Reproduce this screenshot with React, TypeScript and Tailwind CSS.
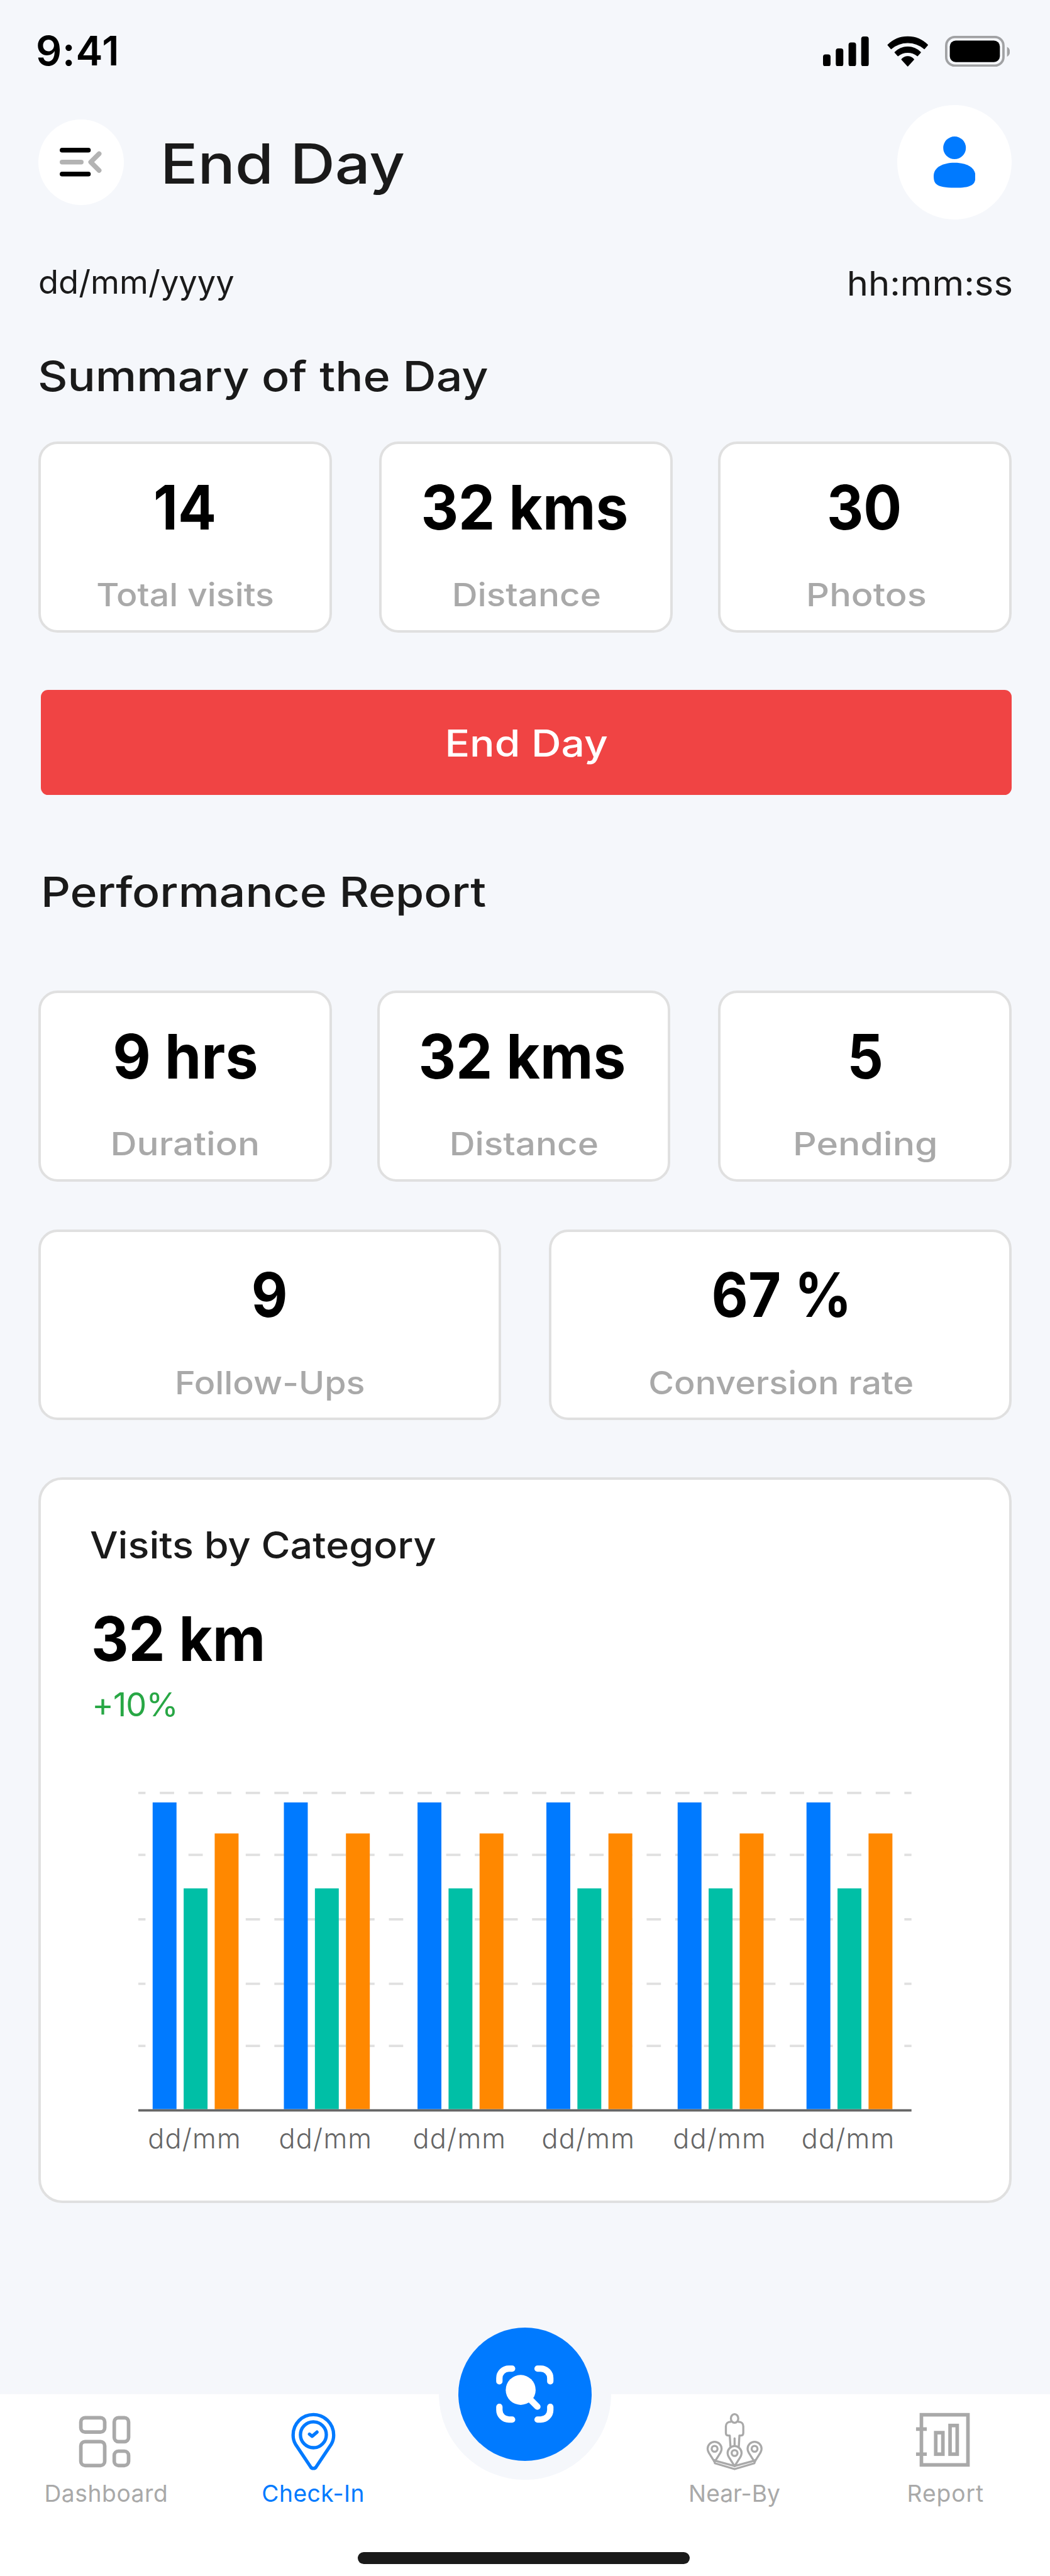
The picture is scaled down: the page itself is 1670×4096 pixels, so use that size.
import type { ReactNode } from "react";

function StatusBar() {
  return (
    <div className="flex h-[171px] items-center justify-between pl-[60px] pr-[67px]">
      <span className="text-[68px] leading-[80px] font-semibold tracking-[0.9px] text-black">9:41</span>
      <div className="flex items-center pt-[1px]">
        <svg width="77" height="50" viewBox="0 0 77 50" className="fill-black">
          <rect x="0" y="30" width="12.6" height="20" rx="4" />
          <rect x="21.4" y="20" width="12.6" height="30" rx="4" />
          <rect x="42.8" y="10" width="12.6" height="40" rx="4" />
          <rect x="64" y="0" width="12.6" height="50" rx="4" />
        </svg>
        <svg width="69" height="50" viewBox="0 0 69 50" className="ml-[30px] overflow-visible fill-black stroke-black" strokeWidth="1.4" strokeLinejoin="round">
          <path d="M1.2 14.3A47 47 0 0 1 67.8 14.3L62.3 20.6A43 43 0 0 0 6.7 20.6Z" />
          <path d="M13 26.6A30 30 0 0 1 56 26.6L50.8 32.5A25.7 25.7 0 0 0 18.2 32.5Z" />
          <path d="M24.4 38.4A13 13 0 0 1 44.6 38.4L34.5 49.6Z" />
        </svg>
        <svg width="109" height="52" viewBox="0 0 109 52" className="ml-[28px]">
          <rect x="2" y="2" width="96" height="48" rx="14.5" fill="none" stroke="#a1a2a4" strokeWidth="4" />
          <rect x="8" y="8" width="84" height="36" rx="10" />
          <path d="M104 18.5C107 20 109 23 109 26.5S107 33.5 104 35Z" fill="#a1a2a4" />
        </svg>
      </div>
    </div>
  );
}

function Header() {
  return (
    <header className="mt-[5px] flex h-[192px] items-center px-[64px]">
      <button className="flex size-[144px] items-center justify-center rounded-full bg-white">
        <svg width="72" height="48" viewBox="0 0 72 48" fill="none" strokeWidth="8" strokeLinecap="round" strokeLinejoin="round">
          <path d="M4 4h44M4 44h44" stroke="#000" />
          <path d="M4 24h32M66 10 52 24l14 14" stroke="#b3b3b3" />
        </svg>
      </button>
      <h1 className="mt-1.5 ml-[61px] origin-left scale-x-[1.127] text-[92.4px] leading-[96px] font-medium text-[#1a1a1a]">
        End Day
      </h1>
      <div className="ml-auto flex size-[192px] items-center justify-center rounded-full bg-white">
        <svg width="70" height="86" viewBox="0 0 70 86" fill="#007aff">
          <circle cx="35" cy="19" r="19" />
          <path d="M0 66C0 52 15 44 35 44S70 52 70 66C70 79 67 86 35 86S0 79 0 66Z" />
        </svg>
      </div>
    </header>
  );
}

type StatProps = { value: string; label: string; className: string; valueClass: string; labelClass: string };

function Stat({ value, label, className, valueClass, labelClass }: StatProps) {
  return (
    <div className={`flex h-[320px] flex-col items-center rounded-[32px] border-[4.3px] border-[#e0e0e0] bg-white pt-[50.5px] whitespace-nowrap ${className}`}>
      <span className={`text-[103px] leading-[112px] font-bold text-black ${valueClass}`}>{value}</span>
      <span className={`mt-[58px] text-[54px] leading-[64px] font-medium text-[#a9a9a9] ${labelClass}`}>{label}</span>
    </div>
  );
}

function SectionTitle({ className, children }: { className: string; children: ReactNode }) {
  return (
    <h2 className={`origin-left self-start text-[69.3px] leading-[80px] font-medium whitespace-nowrap text-[#1a1a1a] ${className}`}>
      {children}
    </h2>
  );
}

const groups = [
  { x: 24, label: 93.5 },
  { x: 244, label: 313 },
  { x: 468, label: 537.5 },
  { x: 684, label: 753.5 },
  { x: 904, label: 973.5 },
  { x: 1120, label: 1189 },
];
const gridLines = [4, 108, 216, 324, 428];

function Chart() {
  return (
    <svg width="1296" height="640" viewBox="0 0 1296 640" className="mt-[112px] ml-[80px] block">
      {gridLines.map((y) => (
        <path key={y} d={`M0 ${y}H1296`} stroke="#e0e0e0" strokeWidth="4" strokeDasharray="24 24" strokeDashoffset="12" />
      ))}
      {groups.map((g) => (
        <g key={g.x}>
          <rect x={g.x} y="20" width="40" height="514" fill="#007aff" />
          <rect x={g.x + 52} y="164" width="40" height="370" fill="#00bfa6" />
          <rect x={g.x + 104} y="72" width="40" height="462" fill="#ff8800" />
          <text x={g.label + 1} y="600" textAnchor="middle" className="fill-[#666666] text-[45.6px] font-light tracking-[1.3px]">
            dd/mm
          </text>
        </g>
      ))}
      <path d="M0 536H1296" stroke="#666666" strokeWidth="4" />
    </svg>
  );
}

function DashboardIcon() {
  return (
    <svg width="100" height="104" viewBox="0 0 100 104" fill="none" stroke="currentColor" strokeWidth="6">
      <rect x="8" y="12" width="40" height="24" rx="7" />
      <rect x="64" y="12" width="24" height="40" rx="7" />
      <rect x="8" y="52" width="40" height="40" rx="7" />
      <rect x="64" y="68" width="24" height="24" rx="7" />
    </svg>
  );
}

function CheckInIcon() {
  return (
    <svg width="100" height="104" viewBox="0 0 100 104" fill="none" stroke="currentColor" strokeWidth="5.6" strokeLinecap="round" strokeLinejoin="round">
      <path d="M50 6.8C31 6.8 16 22 16 41c0 5.5 1.3 10.7 4 15.3L45.3 94.2c2 3.6 7.4 3.6 9.4 0L80 56.3c2.7-4.6 4-9.8 4-15.3C84 22 69 6.8 50 6.8Z" />
      <circle cx="50" cy="40.5" r="21.7" />
      <path d="M43.5 39.5 48 43l8-7" />
    </svg>
  );
}

function MapPin({ x, y }: { x: number; y: number }) {
  return (
    <g transform={`translate(${x} ${y})`}>
      <path d="M0 22-9.8 6.5C-11.2 4-11.7 2-11.7 0a11.7 11.7 0 0 1 23.4 0c0 2-.5 4-1.9 6.5Z" />
      <circle r="4.9" />
    </g>
  );
}

function NearByIcon() {
  return (
    <svg width="100" height="104" viewBox="0 0 100 104" fill="none" stroke="currentColor" strokeWidth="3.5" strokeLinecap="round" strokeLinejoin="round">
      <ellipse cx="49.9" cy="13.2" rx="6.2" ry="7.3" />
      <path d="M43.5 18.8c-4.8 0-8.2 2.7-8.2 7.5v11c0 3 1.7 4.5 4.5 4.5h2L43 60M56.3 18.8c4.8 0 8.2 2.7 8.2 7.5v11c0 3-1.7 4.5-4.5 4.5h-2L57 60M49.9 46.5V59" />
      <MapPin x={16.4} y={64} />
      <MapPin x={83.4} y={64} />
      <MapPin x={49.9} y={71.2} />
      <path d="M18 84.2 49.9 92.8 82 84.2M15.5 83 17 88.3 49.9 98 83 88.3l1.5-5.3" />
    </svg>
  );
}

function ReportIcon() {
  return (
    <svg width="100" height="104" viewBox="0 0 100 104" fill="none" stroke="currentColor" strokeWidth="6">
      <rect x="10" y="7" width="78" height="84" />
      <path d="M1 31h18M1 73h18" />
      <rect x="34" y="37" width="12" height="36" />
      <rect x="58" y="25" width="12" height="48" />
    </svg>
  );
}

function NavItem({ icon, label, className }: { icon: ReactNode; label: string; className: string }) {
  return (
    <a className={`flex flex-col items-center pt-[28px] ${className}`}>
      {icon}
      <span className="mt-[10px] text-[39.2px] leading-[48px] whitespace-nowrap">{label}</span>
    </a>
  );
}

function BottomNav() {
  return (
    <nav className="relative mt-auto h-[304.6px] bg-white">
      <div className="grid h-[264.5px] grid-cols-[356px_338px_358px_358px_350px]">
        <NavItem icon={<DashboardIcon />} label="Dashboard" className="tracking-[0.6px] text-[#a9a9a9]" />
        <NavItem icon={<CheckInIcon />} label="Check-In" className="tracking-[0.5px] text-[#007aff]" />
        <span />
        <NavItem icon={<NearByIcon />} label="Near-By" className="text-[#a9a9a9]" />
        <NavItem icon={<ReportIcon />} label="Report" className="tracking-[1px] text-[#a9a9a9]" />
      </div>
      <div className="ml-[600px] h-[20px] w-[556px] rounded-full bg-[#1a1a1a]" />
      <button className="absolute -top-[144px] left-[736px] flex size-[288px] items-center justify-center rounded-full bg-[#f5f7fb]">
        <span className="flex size-[224px] items-center justify-center rounded-full bg-[#007aff]">
          <svg width="128" height="128" viewBox="0 0 24 24" fill="none" stroke="#fff" strokeWidth="2" strokeLinecap="round" strokeLinejoin="round">
            <path d="M4 8V7a3 3 0 0 1 3-3h1M16 4h1a3 3 0 0 1 3 3v1M20 16v1a3 3 0 0 1-3 3h-1M8 20H7a3 3 0 0 1-3-3v-1" />
            <circle cx="10.7" cy="10.7" r="4.7" fill="#fff" stroke="none" />
            <path d="m12.5 12.5 3.45 3.45" />
          </svg>
        </span>
      </button>
    </nav>
  );
}

export default function App() {
  return (
    <div className="flex h-[4316.6px] w-[1760px] flex-col overflow-hidden bg-[#f5f7fb] font-['Inter',sans-serif] [zoom:0.948864]">
      <StatusBar />
      <Header />
      <div className="mt-[68px] flex h-[72px] items-center justify-between px-[64px] text-[#1a1a1a]">
        <span className="origin-left scale-x-[1.018] text-[54.3px] leading-[72px]">dd/mm/yyyy</span>
        <span className="-mr-[2px] mt-[6px] origin-right scale-x-[1.07] text-[57px] leading-[72px]">hh:mm:ss</span>
      </div>

      <SectionTitle className="mt-[83px] ml-[63px] scale-x-[1.12]">Summary of the Day</SectionTitle>
      <div className="mt-[69px] flex pl-[64px]">
        <Stat value="14" label="Total visits" className="w-[492px]" valueClass="scale-x-[0.925]" labelClass="scale-x-[1.083]" />
        <Stat value="32 kms" label="Distance" className="ml-[80px] w-[492px]" valueClass="-translate-x-[3px] scale-x-[0.947]" labelClass="scale-x-[1.105]" />
        <Stat value="30" label="Photos" className="ml-[76px] w-[492px]" valueClass="-translate-x-[1px] scale-x-[0.925]" labelClass="translate-x-[2px] scale-x-[1.127]" />
      </div>

      <button className="mt-[96px] ml-[68px] flex h-[176px] w-[1628px] items-center justify-center rounded-[12px] bg-[#f04444]">
        <span className="mt-[3px] scale-x-[1.127] text-[61.6px] leading-[72px] font-medium text-white">End Day</span>
      </button>

      <SectionTitle className="mt-[123px] ml-[68px] scale-x-[1.115]">Performance Report</SectionTitle>
      <div className="mt-[125px] flex pl-[64px]">
        <Stat value="9 hrs" label="Duration" className="w-[492px]" valueClass="translate-x-[1px] scale-x-[0.957]" labelClass="scale-x-[1.14]" />
        <Stat value="32 kms" label="Distance" className="ml-[76px] w-[492px]" valueClass="-translate-x-[3px] scale-x-[0.947]" labelClass="scale-x-[1.105]" />
        <Stat value="5" label="Pending" className="ml-[80px] w-[492px]" valueClass="scale-x-[0.92]" labelClass="scale-x-[1.15]" />
      </div>
      <div className="mt-[80px] flex gap-[80px] pl-[64px]">
        <Stat value="9" label="Follow-Ups" className="w-[776px]" valueClass="scale-x-[0.91]" labelClass="scale-x-[1.087]" />
        <Stat value="67 %" label="Conversion rate" className="w-[776px]" valueClass="translate-x-[2px] scale-x-[0.92]" labelClass="translate-x-[1px] scale-x-[1.086]" />
      </div>

      <section className="mt-[96px] ml-[64px] flex h-[1216px] w-[1632px] flex-col items-start rounded-[40px] border-[4.3px] border-[#e0e0e0] bg-white pt-[74px] pl-[84px]">
        <h3 className="-ml-[1px] origin-left scale-x-[1.077] text-[61.6px] leading-[72px] font-medium whitespace-nowrap text-[#1a1a1a]">
          Visits by Category
        </h3>
        <p className="mt-[65px] ml-[0.5px] origin-left scale-x-[0.944] text-[103px] leading-[112px] font-bold text-black">32 km</p>
        <p className="mt-[21px] ml-[2px] text-[55px] leading-[64px] tracking-[-0.9px] text-[#28a745]">+10%</p>
        <Chart />
      </section>

      <BottomNav />
    </div>
  );
}
